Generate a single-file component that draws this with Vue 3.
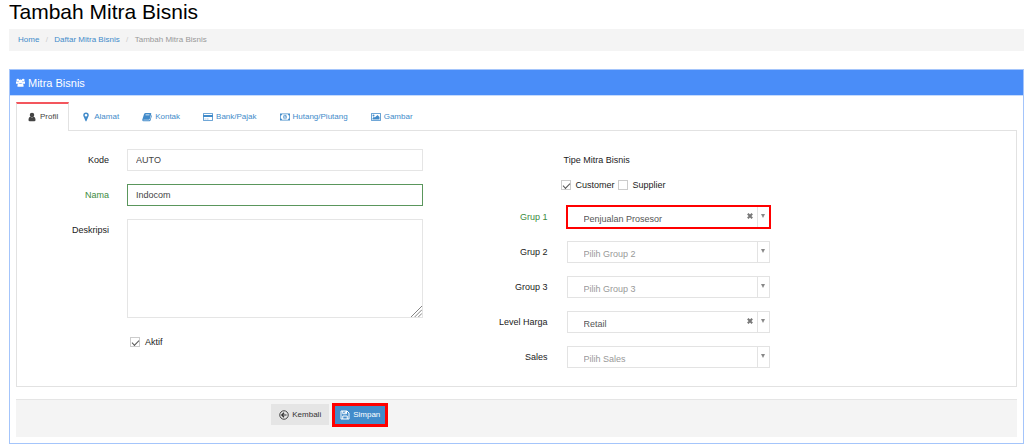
<script setup>
import { ref, reactive } from 'vue'

const activeTab = ref('profil')
const tabs = [
  { id: 'profil', label: 'Profil', icon: 'user' },
  { id: 'alamat', label: 'Alamat', icon: 'pin' },
  { id: 'kontak', label: 'Kontak', icon: 'book' },
  { id: 'bank', label: 'Bank/Pajak', icon: 'card' },
  { id: 'hutang', label: 'Hutang/Piutang', icon: 'money' },
  { id: 'gambar', label: 'Gambar', icon: 'image' }
]

const form = reactive({ kode: 'AUTO', nama: 'Indocom', deskripsi: '', aktif: true, customer: true, supplier: false })

const selects = reactive([
  { id: 'grup1', label: 'Grup 1', placeholder: 'Pilih Group 1', options: ['Penjualan Prosesor'], value: 'Penjualan Prosesor', valid: true },
  { id: 'grup2', label: 'Grup 2', placeholder: 'Pilih Group 2', options: [], value: '' },
  { id: 'grup3', label: 'Group 3', placeholder: 'Pilih Group 3', options: [], value: '' },
  { id: 'level', label: 'Level Harga', placeholder: 'Pilih Level Harga', options: ['Retail'], value: 'Retail' },
  { id: 'sales', label: 'Sales', placeholder: 'Pilih Sales', options: [], value: '' }
])
</script>

<template>
  <main class="page">
    <h1>Tambah Mitra Bisnis</h1>
    <nav class="crumbs" aria-label="Breadcrumb">
      <a href="#">Home</a><span class="sep">/</span>
      <a href="#">Daftar Mitra Bisnis</a><span class="sep">/</span>
      <span>Tambah Mitra Bisnis</span>
    </nav>

    <section class="panel">
      <h2>
        <svg class="head-icon" viewBox="0 0 20 20" fill="currentColor" aria-hidden="true">
          <circle cx="4" cy="4.500" r="3" /><circle cx="16" cy="4.500" r="3" /><circle cx="10" cy="7.500" r="4.200" />
          <path d="M0 12V9q0-2 2-2 2 2 4 1 0 2 1.500 3.500Q5 12 4 13H1.500Q0 13 0 12zM20 12V9q0-2-2-2-2 2-4 1 0 2-1.500 3.500Q15 12 16 13h2.500q1.500 0 1.500-1zM3 17.500q0-5.500 4-6 3 2.500 6 0 4 .5 4 6 0 2-2 2H5q-2 0-2-2z" />
        </svg>
        Mitra Bisnis
      </h2>
      <form class="body" @submit.prevent>
        <div class="tabs" role="tablist">
          <button
            v-for="t in tabs" :key="t.id" type="button" role="tab" class="tab"
            :class="{ active: activeTab === t.id }" :aria-selected="activeTab === t.id" @click="activeTab = t.id"
          >
            <svg class="icon" viewBox="0 0 20 20" fill="currentColor" aria-hidden="true">
              <template v-if="t.icon === 'user'">
                <circle cx="10" cy="6" r="4.500" />
                <path d="M3 16q0-6 4-6.500 3 2.500 6 0 4 .5 4 6.500 0 2.500-2.500 2.500h-9Q3 18.500 3 16z" />
              </template>
              <path v-else-if="t.icon === 'pin'" fill-rule="evenodd" d="M10 1a5.500 5.500 0 0 1 5.500 5.500q0 1.500-.7 2.700L11 18q-1 1.800-2 0L5.200 9.200Q4.500 8 4.500 6.500A5.500 5.500 0 0 1 10 1zm0 2.900a2.600 2.600 0 1 0 0 5.200 2.600 2.600 0 0 0 0-5.200z" />
              <path v-else-if="t.icon === 'book'" fill-rule="evenodd" d="M7 2h10q2 0 1.500 2L15.500 14q-.5 1.500-2 1.500H3.500q-1.500 0-1 1h11.800q1.200 0 1.600-1.300L19 6q1 .5.700 1.800L17 17q-.5 1.500-2 1.500H3q-2.500 0-2.500-3L4 4.500Q5 2 7 2zm.3 3-.4 1.300h7.800l.4-1.300z" />
              <path v-else-if="t.icon === 'card'" fill-rule="evenodd" d="M2 2h16q2 0 2 2v12q0 2-2 2H2q-2 0-2-2V4q0-2 2-2zm0 1.700q-.4 0-.4.500V6h16.800V4.200q0-.5-.4-.5zM1.600 10v5.800q0 .5.400.5h16q.4 0 .4-.5V10zM3 13.300h2.500v1.400H3zm4 0h4v1.400H7z" />
              <path v-else-if="t.icon === 'money'" fill-rule="evenodd" d="M0 3h20v14H0zm4 1.600q0 2.400-2.500 2.400v6Q4 13 4 15.400h12q0-2.400 2.500-2.400V7Q16 7 16 4.600zM10 5.500q3.500 0 3.500 4.500t-3.500 4.500T6.500 10 10 5.500zM9.300 7 8 8.200l.7.800.5-.4v3H8V13h4v-1.400h-1.200V7z" />
              <path v-else fill-rule="evenodd" d="M2 2h16q2 0 2 2v12q0 2-2 2H2q-2 0-2-2V4q0-2 2-2zm0 1.600q-.4 0-.4.400v12q0 .4.400.4h16q.4 0 .4-.4V4q0-.4-.4-.4zM5 5a2 2 0 1 1 0 4 2 2 0 0 1 0-4zM3 15v-2.500l3-3 1.700 1.700L13 6l4 4v5z" />
            </svg>
            {{ t.label }}
          </button>
        </div>

        <div class="pane">
          <div class="left">
            <label for="kode">Kode</label>
            <input id="kode" v-model="form.kode" class="field" type="text">
            <label for="nama" class="ok">Nama</label>
            <input id="nama" v-model="form.nama" class="field valid" type="text">
            <label for="deskripsi">Deskripsi</label>
            <div class="area">
              <textarea id="deskripsi" v-model="form.deskripsi" class="field"></textarea>
              <svg class="grip" viewBox="0 0 12 12" fill="none" stroke="#777" aria-hidden="true">
                <path d="M0 12 12 0M4 12l8-8M8 12l4-4" />
              </svg>
            </div>
            <label class="check active-check"><input v-model="form.aktif" type="checkbox">Aktif</label>
          </div>

          <div class="right">
            <fieldset>
              <legend>Tipe Mitra Bisnis</legend>
              <div class="checks">
                <label class="check"><input v-model="form.customer" type="checkbox">Customer</label>
                <label class="check"><input v-model="form.supplier" type="checkbox">Supplier</label>
              </div>
            </fieldset>
            <template v-for="s in selects" :key="s.id">
              <label :for="s.id" :class="{ ok: s.valid }">{{ s.label }}</label>
              <div class="pick" :class="{ marked: s.valid }">
                <select :id="s.id" v-model="s.value" :class="{ empty: !s.value }">
                  <option value="">{{ s.placeholder }}</option>
                  <option v-for="o in s.options" :key="o">{{ o }}</option>
                </select>
                <button v-if="s.value" type="button" class="clear" :aria-label="'Hapus ' + s.label" @click="s.value = ''">
                  <svg viewBox="0 0 6 6" stroke="#777" stroke-width="2" aria-hidden="true"><path d="M.8.8l4.400 4.400M5.200.8.8 5.200" /></svg>
                </button>
                <span class="arrow"></span>
              </div>
            </template>
          </div>
        </div>

        <div class="actions">
          <button type="button" class="btn">
            <svg class="icon" viewBox="0 0 20 20" fill="none" stroke="currentColor" stroke-width="1.800" aria-hidden="true">
              <circle cx="10" cy="10" r="8.500" /><path d="M15 10H6M10 5.500 5.500 10l4.500 4.500" stroke-width="2.400" />
            </svg>
            Kembali
          </button>
          <button type="submit" class="btn primary">
            <svg class="icon" viewBox="0 0 20 20" fill="none" stroke="currentColor" stroke-width="2" aria-hidden="true">
              <path d="M2 2h12l4 4v12H2zM5.500 18v-6h9v6M5.500 2v5.500H13V2" /><path d="M10.500 3v3.500" stroke-width="2.500" />
            </svg>
            Simpan
          </button>
        </div>
      </form>
    </section>
  </main>
</template>

<style>
body { margin: 0; background: #fff; }
</style>

<style scoped>
* { box-sizing: border-box; }
.page { padding-left: 9px; font: 9px/12px "Liberation Sans", Arial, sans-serif; color: #222; }
button, input, select, textarea { font: inherit; color: inherit; margin: 0; }
h1 { margin: 0 0 5px; font-size: 21px; line-height: 24px; font-weight: 400; color: #000; }
.crumbs { display: flex; align-items: center; height: 22px; padding: 0 9px; background: #f4f4f4; font-size: 8px; color: #999; }
.crumbs a { color: #428bca; text-decoration: none; }
.sep { width: 15px; text-align: center; color: #ccc; }
.panel { margin-top: 18px; border: 1px solid #a4c5fb; }
h2 { display: flex; align-items: center; gap: 3px; height: 26px; margin: 0; padding: 0 6px; border-bottom: 1px solid #c5dafc; background: #4a8df8; color: #fff; font-size: 11px; font-weight: 400; }
.head-icon { width: 9px; height: 9px; }
.body { padding: 6px; }
.tabs { display: flex; gap: 1px; }
.tab { display: flex; align-items: center; gap: 3px; height: 29px; margin-bottom: -1px; padding: 0 10px 1px; border: 1px solid transparent; border-top-width: 2px; border-bottom: 0; background: none; color: #428bca; font-size: 8px; }
.tab.active { border-color: #e2e2e2; border-top-color: #f3565d; background: #fff; color: #444; position: relative; }
.icon { width: 10px; height: 10px; flex: none; }
.pane { display: grid; grid-template-columns: 468fr 530fr; padding: 18px 0; border: 1px solid #e2e2e2; }
.left, .right { display: grid; align-content: start; row-gap: 13px; }
.left { grid-template-columns: 92fr 296fr 44fr; column-gap: 18px; }
.right { grid-template-columns: 62fr 203fr 227fr; column-gap: 19px; }
.left > label, .right > label { grid-column: 1; line-height: 22px; text-align: right; white-space: nowrap; justify-self: end; }
.left > .ok, .right > .ok { color: #3c8a3e; }
.field { display: block; width: 100%; height: 22px; padding: 0 8px; border: 1px solid #e5e5e5; border-radius: 0; background: #fff; color: #444; outline: none; }
.field.valid { border-color: #5a965c; }
.area { position: relative; }
textarea.field { height: 99px; resize: none; }
.grip { position: absolute; right: 1px; bottom: 1px; width: 11px; height: 11px; pointer-events: none; }
.check { display: flex; align-items: center; gap: 5px; }
.left > .active-check { grid-column: 2; justify-self: start; padding-left: 3px; line-height: 22px; }
.check input { appearance: none; position: relative; width: 10px; height: 10px; border: 1px solid #ccc; background: #fff; }
.check input:checked::after { content: ""; position: absolute; left: 1px; top: 2px; width: 6px; height: 3px; border: solid #555; border-width: 0 0 1px 1px; transform: rotate(-45deg); }
fieldset { grid-column: 2; min-width: 0; margin: 0 0 -3px -6px; padding: 0; border: 0; }
legend { padding: 0 0 0 3px; line-height: 22px; }
.checks { display: flex; gap: 3px; height: 22px; margin-top: 3px; }
.pick { position: relative; height: 22px; border: 1px solid #e3e3e3; }
.pick.marked { outline: 2px solid #f00; outline-offset: -1px; }
select { appearance: none; display: block; width: 100%; height: 20px; padding: 3px 28px 0 16px; border: 0; background: #fff; color: #555; outline: none; }
select.empty { color: #999; }
.clear { position: absolute; right: 16px; top: 6px; width: 6px; height: 6px; padding: 0; border: 0; background: none; }
.clear svg { display: block; width: 6px; height: 6px; }
.arrow { position: absolute; top: 0; right: 0; width: 12px; height: 20px; border-left: 1px solid #e3e3e3; pointer-events: none; }
.arrow::before { content: ""; position: absolute; left: 3px; top: 7px; border: solid transparent; border-width: 4px 2px 0; border-top-color: #888; }
.actions { display: flex; align-items: center; gap: 3px; height: 38px; margin-top: 12px; padding: 0 0 8px 25.5%; border-top: 1px solid #e5e5e5; background: #f4f4f4; }
.btn { display: flex; align-items: center; justify-content: center; gap: 3px; height: 21px; padding: 0 8px; border: 0; background: #e5e5e5; color: #333; font-size: 8px; }
.btn.primary { height: 24px; padding: 0 5px; border: 3px solid #f00; background: #428bca; color: #fff; }
</style>
